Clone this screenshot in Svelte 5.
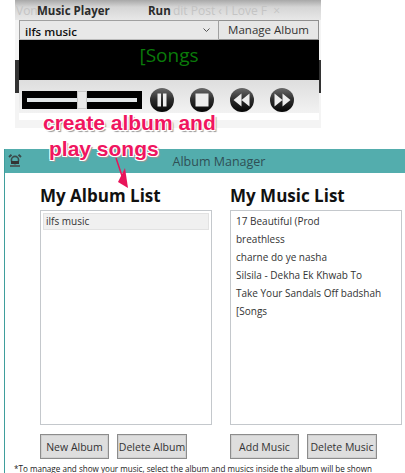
<script>
	const transport = ['pause', 'stop', 'back', 'forward'];
	const songs = ['17 Beautiful (Prod', 'breathless', 'charne do ye nasha', 'Silsila - Dekha Ek Khwab To', 'Take Your Sandals Off badshah', '[Songs'];
</script>

<div class="page">
	<section class="player">
		<div class="tabs">
			<span class="ghost first">Von</span>
			<span class="tab music">Music Player</span>
			<span class="tab run">Run</span>
			<span class="ghost post">dit Post ‹ I Love F &nbsp;×</span>
		</div>
		<div class="picker">
			<div class="combo">
				<span>ilfs music</span>
				<svg width="7" height="4" viewBox="0 0 7 4"><path d="M0.5 0.5 3.5 3.5 6.5 0.5" fill="none" stroke="#555" /></svg>
			</div>
			<div class="manage">Manage Album</div>
		</div>
		<div class="screen">[Songs</div>
		<div class="controls">
			<div class="slider">
				<div class="track"></div>
				<div class="thumb"></div>
			</div>
			{#each transport as name}
				<svg class="round" width="24" height="24" viewBox="0 0 24 24">
					<defs>
						<linearGradient id="ball-{name}" x1="0" y1="0" x2="0" y2="1">
							<stop offset="0" stop-color="#6a6a6a" />
							<stop offset="0.5" stop-color="#2b2b2b" />
							<stop offset="1" stop-color="#050505" />
						</linearGradient>
					</defs>
					<circle cx="12" cy="12" r="12" fill="url(#ball-{name})" />
					{#if name === 'pause'}
						<rect x="7.5" y="5.5" width="3.5" height="13" fill="#eee" />
						<rect x="13" y="5.5" width="3.5" height="13" fill="#eee" />
					{:else if name === 'stop'}
						<rect x="5.5" y="5.5" width="13" height="13" fill="#eee" />
					{:else if name === 'back'}
						<path d="M3.5 12 11.5 5.5V18.5ZM11.5 12 19.5 5.5V18.5Z" fill="#eee" />
					{:else}
						<path d="M20.5 12 12.5 5.5V18.5ZM12.5 12 4.5 5.5V18.5Z" fill="#eee" />
					{/if}
				</svg>
			{/each}
		</div>
		<div class="strip"></div>
	</section>

	<section class="manager">
		<header class="titlebar">
			<svg class="clock" width="14" height="13" viewBox="0 0 14 13">
				<circle cx="7" cy="6" r="3.6" fill="none" stroke="#3a4a4a" stroke-width="1.6" />
				<path d="M1 3 3.5 0.8M13 3 10.5 0.8" stroke="#3a4a4a" stroke-width="2" />
				<rect x="3" y="7" width="8" height="3" fill="#333" />
				<path d="M2 12H12" stroke="#444" stroke-width="1.5" />
			</svg>
			<span>Album Manager</span>
		</header>
		<div class="columns">
			<div class="column">
				<h2>My Album List</h2>
				<div class="list">
					<div class="row selected">ilfs music</div>
				</div>
				<div class="actions">
					<button class="new">New Album</button>
					<button class="del">Delete Album</button>
				</div>
			</div>
			<div class="column">
				<h2>My Music List</h2>
				<div class="list">
					{#each songs as song}
						<div class="row">{song}</div>
					{/each}
				</div>
				<div class="actions">
					<button class="new">Add Music</button>
					<button class="del">Delete Music</button>
				</div>
			</div>
		</div>
		<p class="note">*To manage and show your music, select the album and musics inside the album will be shown</p>
	</section>

	<div class="callout">
		<div>create album and</div>
		<div class="second">play songs</div>
	</div>
	<svg class="arrow" width="30" height="40" viewBox="0 0 30 40">
		<path d="M2 0 8 18" stroke="#e8145a" stroke-width="1.5" fill="none" />
		<path d="M4 24 11 10 14 30Z" fill="#e8145a" />
	</svg>
</div>

<style>
	:global(body) {
		background: #fff;
	}

	.page {
		position: relative;
		width: 405px;
		height: 473px;
		overflow: hidden;
		background: #fff;
		font-family: 'Open Sans', 'Noto Sans', sans-serif;
		color: #333;
	}

	.player {
		margin-left: 15px;
		width: 306px;
		height: 128px;
		background: linear-gradient(#f4f4f4 60px, #333 60px, #333 93px, #f4f4f4 93px);
		display: flex;
		flex-direction: column;
		align-items: flex-start;
	}

	.tabs {
		position: relative;
		width: 100%;
		height: 20px;
		flex: none;
		background: linear-gradient(#a8a8a8, #d5d5d5 35%, #e8e8e8);
		font-weight: 700;
		font-size: 11.5px;
		line-height: 21px;
		color: #2b2b2b;
	}

	.tab,
	.ghost {
		position: absolute;
		top: 0;
	}

	.music {
		left: 22px;
	}

	.run {
		left: 133px;
	}

	.ghost {
		font-weight: 400;
		color: #c4c4c4;
		white-space: nowrap;
		font-size: 12px;
	}

	.first {
		left: 1px;
	}

	.post {
		left: 158px;
	}

	.picker {
		display: flex;
		margin-left: 4px;
		height: 20px;
		width: 300px;
		flex: none;
		font-size: 11px;
	}

	.combo {
		width: 200px;
		display: flex;
		align-items: center;
		justify-content: space-between;
		padding: 3px 8px 0 5px;
		box-sizing: border-box;
		background: #e8e8e8;
		border: 1px solid #a0a0a0;
		border-bottom-color: #bbb;
		font-weight: 600;
		color: #111;
		font-size: 11.5px;
	}

	.combo svg {
		margin-top: -4px;
	}

	.manage {
		flex: 1;
		text-align: center;
		line-height: 18px;
		background: #e6e6e6;
		border: 1px solid #8f8f8f;
		border-left: 0;
		color: #333;
		font-size: 11.5px;
	}

	.screen {
		margin-left: 4px;
		width: 300px;
		height: 40px;
		flex: none;
		background: #000;
		color: #0a7a0a;
		text-align: center;
		font-size: 19px;
		line-height: 31px;
	}

	.controls {
		margin-left: 4px;
		width: 300px;
		height: 33px;
		flex: none;
		box-sizing: border-box;
		background: linear-gradient(#dedede, #f2f2f2);
		padding: 11px 0 0 3px;
		display: flex;
		align-items: flex-start;
		gap: 16px;
	}

	.slider {
		position: relative;
		width: 120px;
		height: 18px;
		margin-right: -8px;
		background: #000;
	}

	.track {
		position: absolute;
		left: 5px;
		right: 5px;
		top: 7px;
		height: 4px;
		background: #e2e6e8;
	}

	.thumb {
		position: absolute;
		left: 55px;
		top: 0;
		width: 10px;
		height: 18px;
		box-sizing: border-box;
		background: #e8e8e8;
		border: 1px solid #c8c8c8;
	}

	.round {
		flex: none;
		margin-top: -3px;
	}

	.strip {
		margin: 0 0 0 4px;
		width: 300px;
		height: 7px;
		flex: none;
		background: #fff;
	}

	.manager {
		margin: 21px 0 0 4px;
		height: 324px;
		border-left: 1px solid #3f9e9c;
		box-sizing: border-box;
	}

	.titlebar {
		position: relative;
		height: 24px;
		background: #53adad;
		text-align: center;
		font-size: 12.5px;
		line-height: 25px;
		color: #2f4f55;
	}

	.titlebar span {
		margin-left: 28px;
	}

	.clock {
		position: absolute;
		left: 3px;
		top: 5px;
	}

	.columns {
		display: flex;
		margin-left: 35px;
		gap: 18px;
	}

	.column {
		width: 172px;
		flex: none;
	}

	h2 {
		margin: 0;
		height: 37px;
		box-sizing: border-box;
		padding-top: 12px;
		font-size: 17px;
		line-height: 22px;
		font-weight: 700;
		color: #111;
		white-space: nowrap;
	}

	.list {
		height: 215px;
		box-sizing: border-box;
		border: 1px solid #c4c8cc;
		padding: 2px;
		font-size: 10px;
		color: #333;
	}

	.row {
		height: 18px;
		line-height: 17px;
		padding-left: 3px;
		white-space: nowrap;
		overflow: hidden;
	}

	.selected {
		background: #f0f0f0;
		border: 1px solid #e2e2e2;
		box-sizing: border-box;
		padding-left: 2px;
		height: 17px;
		line-height: 14px;
	}

	.actions {
		display: flex;
		margin-top: 9px;
		gap: 8px;
	}

	button {
		height: 25px;
		padding: 0;
		background: #dedede;
		border: 1px solid #8c8c8c;
		box-shadow: inset 0 0 0 1px #d0d0d0;
		font: 400 10.5px 'Open Sans', 'Noto Sans', sans-serif;
		color: #333;
		white-space: nowrap;
	}

	.new {
		width: 69px;
	}

	.del {
		width: 70px;
	}

	.note {
		margin: 4px 0 0 9px;
		font-size: 8.1px;
		line-height: 12px;
		color: #222;
		white-space: nowrap;
	}

	.callout {
		position: absolute;
		left: 43px;
		top: 110px;
		font-family: 'Liberation Sans', sans-serif;
		font-weight: 700;
		font-size: 21px;
		line-height: 26px;
		white-space: nowrap;
		color: #f01560;
		text-shadow:
			-1px -1px 0 #fff,
			1px -1px 0 #fff,
			-1px 1px 0 #fff,
			1px 1px 0 #fff,
			2px 2px 1px #999;
	}

	.second {
		margin-left: 6px;
	}

	.arrow {
		position: absolute;
		left: 114px;
		top: 158px;
	}
</style>
